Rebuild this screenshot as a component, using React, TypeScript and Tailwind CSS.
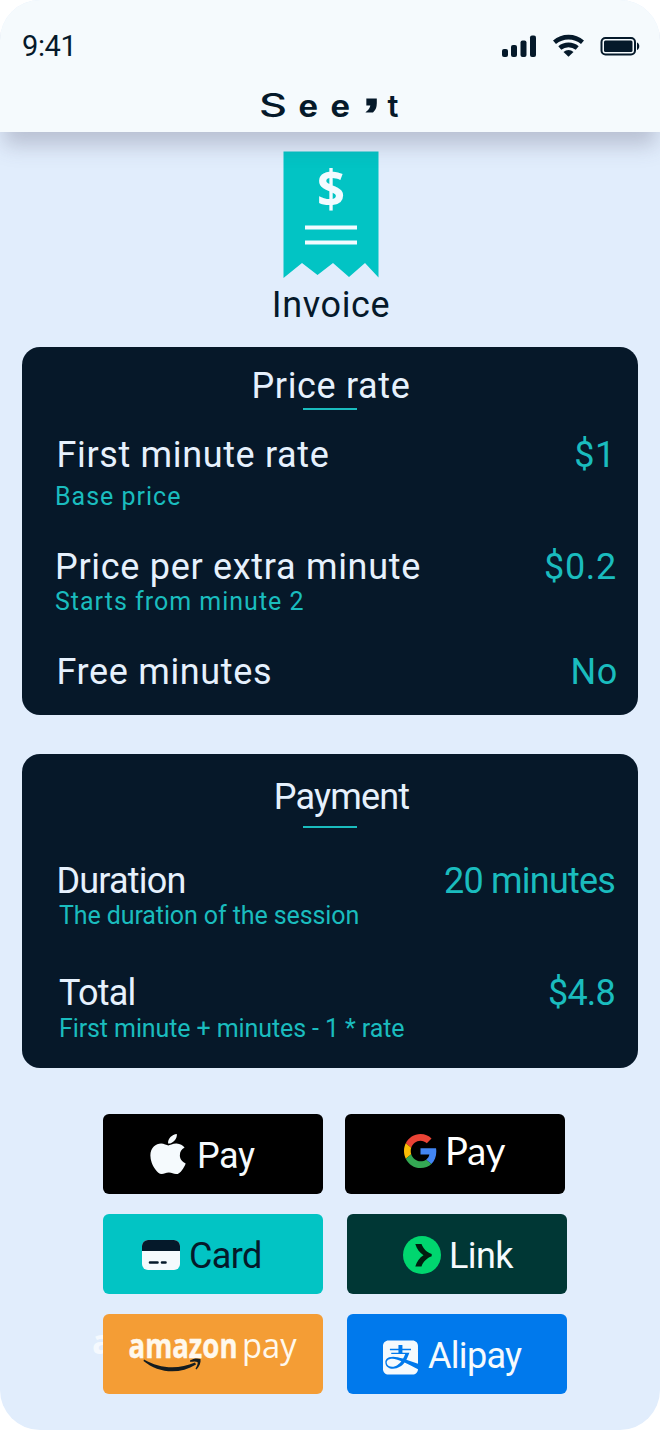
import React from "react";
import { FaApple, FaAlipay } from "react-icons/fa";

function StatusBar() {
  return (
    <div className="flex h-[92px] items-center justify-between pl-[22px] pr-[20px]">
      <span className="text-[29px] leading-8 tracking-[-0.4px]">9:41</span>
      <div className="flex items-center">
        <svg width="36" height="24" viewBox="0 0 36 24" fill="currentColor">
          <rect x="2" y="15" width="6" height="8" rx="2" />
          <rect x="11" y="11" width="6" height="12" rx="2" />
          <rect x="20.500" y="6.500" width="6" height="16.500" rx="2" />
          <rect x="30" y="1.500" width="6" height="21.500" rx="2" />
        </svg>
        <svg className="ml-[15px]" width="34" height="24" viewBox="0 0 34 24" fill="none" stroke="currentColor" strokeWidth="4.600">
          <path d="M3.500 8.200C11.500 1.400 23.500 1.400 31.500 8.200" />
          <path d="M8.800 14C13.800 9.800 21.200 9.800 26.200 14" />
          <path d="M12.500 18C15.500 15.300 19.500 15.300 22.500 18L17.500 22.800Z" fill="currentColor" stroke="none" />
        </svg>
        <svg className="ml-[15px]" width="40" height="24" viewBox="0 0 40 24" fill="currentColor">
          <rect x="1.500" y="4" width="33.500" height="16.500" rx="4" fill="none" stroke="currentColor" strokeWidth="2" />
          <rect x="4" y="6.500" width="28.500" height="11.500" rx="1.500" />
          <path d="M37 8.500C40 9.500 40 15 37 16Z" />
        </svg>
      </div>
    </div>
  );
}

function Wordmark() {
  return (
    <svg className="mx-auto block overflow-visible" width="140" height="32" viewBox="0 0 140 32" fill="#05192a" fontFamily="Inter, sans-serif">
      <text x="-1" y="25" fontSize="32" fontWeight="500" textLength="28" lengthAdjust="spacingAndGlyphs">S</text>
      <text x="38.500" y="25" fontSize="30" fontWeight="700" textLength="19.500" lengthAdjust="spacingAndGlyphs">e</text>
      <text x="70.500" y="25" fontSize="30" fontWeight="700" textLength="19.500" lengthAdjust="spacingAndGlyphs">e</text>
      <text x="102.500" y="38.500" fontSize="46" fontWeight="700" fontFamily="Liberation Sans, sans-serif" textLength="18" lengthAdjust="spacingAndGlyphs" stroke="#05192a" strokeWidth="1">’</text>
      <text x="127.500" y="25" fontSize="31" fontWeight="600">t</text>
    </svg>
  );
}

function InvoiceIcon() {
  return (
    <svg className="mx-auto block" width="96" height="128" viewBox="0 0 96 128">
      <path d="M0.500 0.500H95.500V126.500L82 112L66 126L50 112L34.500 124L19 112L0.500 127Z" fill="#02c4c4" />
      <text x="48" y="56.500" textAnchor="middle" fontFamily="Open Sans, sans-serif" fontWeight="700" fontSize="52" textLength="28" lengthAdjust="spacingAndGlyphs" fill="#f3fbff">$</text>
      <rect x="22" y="74.500" width="52" height="4" fill="#f3fbff" />
      <rect x="22" y="89.500" width="52" height="4" fill="#f3fbff" />
    </svg>
  );
}

function Row({ label, value, className = "" }: { label: string; value: string; className?: string }) {
  return (
    <div className={"flex justify-between whitespace-nowrap text-4xl leading-10 " + className}>
      <span>{label}</span>
      <span className="text-[#1abcbe]">{value}</span>
    </div>
  );
}

function GoogleG() {
  return (
    <svg width="33" height="34" viewBox="0 0 48 48" preserveAspectRatio="none">
      <path fill="#EA4335" d="M24 9.500c3.540 0 6.710 1.220 9.210 3.600l6.850-6.850C35.900 2.380 30.470 0 24 0 14.620 0 6.510 5.380 2.560 13.220l7.980 6.190C12.430 13.720 17.740 9.500 24 9.500z" />
      <path fill="#4285F4" d="M46.980 24.550c0-1.570-.15-3.090-.38-4.550H24v9.020h12.940c-.58 2.960-2.260 5.480-4.780 7.180l7.730 6c4.510-4.180 7.090-10.360 7.090-17.650z" />
      <path fill="#FBBC05" d="M10.530 28.590c-.48-1.450-.76-2.990-.76-4.590s.27-3.140.76-4.590l-7.980-6.190C.92 16.460 0 20.120 0 24c0 3.880.92 7.540 2.560 10.780l7.970-6.190z" />
      <path fill="#34A853" d="M24 48c6.480 0 11.930-2.130 15.890-5.810l-7.730-6c-2.150 1.450-4.920 2.300-8.160 2.300-6.260 0-11.570-4.220-13.470-9.910l-7.980 6.190C6.510 42.620 14.620 48 24 48z" />
    </svg>
  );
}

function CardIcon() {
  return (
    <svg width="38" height="30" viewBox="0 0 38 30">
      <rect width="38" height="30" rx="6" fill="#f5fafd" />
      <path d="M0 11V6A6 6 0 0 1 6 0H32A6 6 0 0 1 38 6V11Z" fill="#05192a" />
      <path d="M8 22.500H15.500M20 22.500H23.500" stroke="#05192a" strokeWidth="2.600" strokeLinecap="round" />
    </svg>
  );
}

function LinkIcon() {
  return (
    <svg width="38" height="38" viewBox="0 0 38 38">
      <circle cx="19" cy="19" r="19" fill="#00d66f" />
      <path d="M12.300 8H18.500C20 12.200 23.500 16.200 28.700 18V20.300C23.500 22.200 20 26 18.500 30.500H12.300C13.800 25.500 16.500 21.700 20.500 19.200C16.500 16.700 13.800 13 12.300 8Z" fill="#011e0f" />
    </svg>
  );
}

function AmazonPay() {
  return (
    <svg className="overflow-visible" width="170" height="48" viewBox="0 0 170 48" fill="#fff8ec">
      <text x="0.500" y="27.500" fontFamily="Open Sans, sans-serif" fontWeight="700" fontSize="34.500" textLength="109" lengthAdjust="spacingAndGlyphs" stroke="#fff8ec" strokeWidth="0.500">amazon</text>
      <text x="114" y="27.500" fontFamily="Open Sans, sans-serif" fontSize="34.500" textLength="54.500" lengthAdjust="spacingAndGlyphs">pay</text>
      <path d="M16 29.500C31 38.500 50 40 67 32.500L68 34.500C51 45 30 43 15.500 31Z" fill="#141c20" />
      <path d="M62 30.500C65.500 28 70 28 72.500 29C73 32.500 71.500 36.500 68.500 39.500L67.500 38.800C69 36 70.200 33.500 69.500 32C67.500 31 65 31.500 62 31.800Z" fill="#141c20" />
    </svg>
  );
}

const button = "flex h-20 w-[220px] items-center rounded-md text-4xl leading-10";

export default function App() {
  return (
    <div className="h-[1430px] w-[660px] bg-white font-['Roboto',sans-serif] text-[#05192a]">
      <div className="h-full overflow-hidden rounded-[40px] bg-[#e1edfc]">
        <header className="relative z-10 h-[132px] bg-[#f5fafd] shadow-[0_17px_20px_-4px_rgba(80,75,105,0.28)]">
          <StatusBar />
          <Wordmark />
        </header>

        <section className="pl-0.5 pt-[19px]">
          <InvoiceIcon />
          <h1 className="mt-1.5 text-center text-4xl leading-10 tracking-[0.65px]">Invoice</h1>
        </section>

        <section className="mx-[22px] mt-[22px] h-[368px] rounded-[18px] bg-[#061829] pl-[33px] pr-5 pt-[19px] tracking-[0.65px] text-[#e6f1fd]">
          <h2 className="-ml-[11px] text-center text-4xl leading-10">Price rate</h2>
          <div className="ml-[248px] mt-0.5 h-0.5 w-[54px] bg-[#1abcbe]" />
          <Row className="ml-[1.500px] mr-0.5 mt-[25px]" label="First minute rate" value="$1" />
          <p className="mt-1.5 text-[25px] leading-8 tracking-[1px] text-[#1abcbe]">Base price</p>
          <Row className="mr-px mt-[34px] tracking-[0.7px]" label="Price per extra minute" value="$0.2" />
          <p className="-mt-px text-[25px] leading-8 tracking-[1px] text-[#1abcbe]">Starts from minute 2</p>
          <Row className="ml-[1.500px] mt-[34px]" label="Free minutes" value="No" />
        </section>

        <section className="mx-[22px] mt-[39px] h-[314px] rounded-[18px] bg-[#061829] pl-[33px] pr-[23px] pt-[23px] tracking-[-0.8px] text-[#e6f1fd]">
          <h2 className="ml-[13px] text-center text-4xl leading-10">Payment</h2>
          <div className="ml-[248px] mt-[9px] h-0.5 w-[54px] bg-[#1abcbe]" />
          <Row className="ml-[1.500px] mt-[33px]" label="Duration" value="20 minutes" />
          <p className="-mt-px ml-1 text-[25px] leading-8 tracking-[-0.1px] text-[#1abcbe]">The duration of the session</p>
          <Row className="ml-1 mt-[41px]" label="Total" value="$4.8" />
          <p className="ml-1 text-[25px] leading-8 tracking-[-0.1px] text-[#1abcbe]">First minute + minutes - 1 * rate</p>
        </section>

        <section className="ml-[103px] mt-[46px] flex flex-col gap-5">
          <div className="flex gap-[22px]">
            <div className={button + " bg-black pl-[47px] text-[#f5fafd]"}>
              <FaApple className="h-[46px] w-[36px]" preserveAspectRatio="none" />
              <span className="ml-[11px] mt-1 tracking-[-0.4px]">Pay</span>
            </div>
            <div className={button + " bg-black pl-[59px] text-white"}>
              <span className="-mt-1.5"><GoogleG /></span>
              <svg className="ml-2 overflow-visible" width="66" height="50" viewBox="0 0 66 50" fill="currentColor">
                <text x="0" y="35.500" fontFamily="Lato, sans-serif" fontSize="39.500" textLength="60.500" lengthAdjust="spacingAndGlyphs">Pay</text>
              </svg>
            </div>
          </div>
          <div className="flex gap-6">
            <div className={button + " bg-[#02c4c4] pl-[39px]"}>
              <span className="mt-0.5"><CardIcon /></span>
              <span className="ml-[9px] mt-1 tracking-[-0.6px]">Card</span>
            </div>
            <div className={button + " bg-[#003735] pl-[56px] text-[#f5fafd]"}>
              <span className="mt-0.5"><LinkIcon /></span>
              <span className="ml-2 mt-1 tracking-[-0.6px]">Link</span>
            </div>
          </div>
          <div className="flex gap-6">
            <div className="relative">
              <span className="absolute -left-[11px] top-[5px] font-['Open_Sans',sans-serif] text-[34px] font-bold leading-[44px] text-white/70">a</span>
              <div className={button + " relative bg-[#f49d35] pl-[25px]"}>
                <AmazonPay />
              </div>
            </div>
            <div className={button + " bg-[#0079ec] pl-[36px] text-[#f5fafd]"}>
              <FaAlipay className="mt-1.5 h-[39px] w-[35px]" preserveAspectRatio="none" />
              <span className="ml-[10px] mt-1 tracking-[-0.7px]">Alipay</span>
            </div>
          </div>
        </section>
      </div>
    </div>
  );
}
